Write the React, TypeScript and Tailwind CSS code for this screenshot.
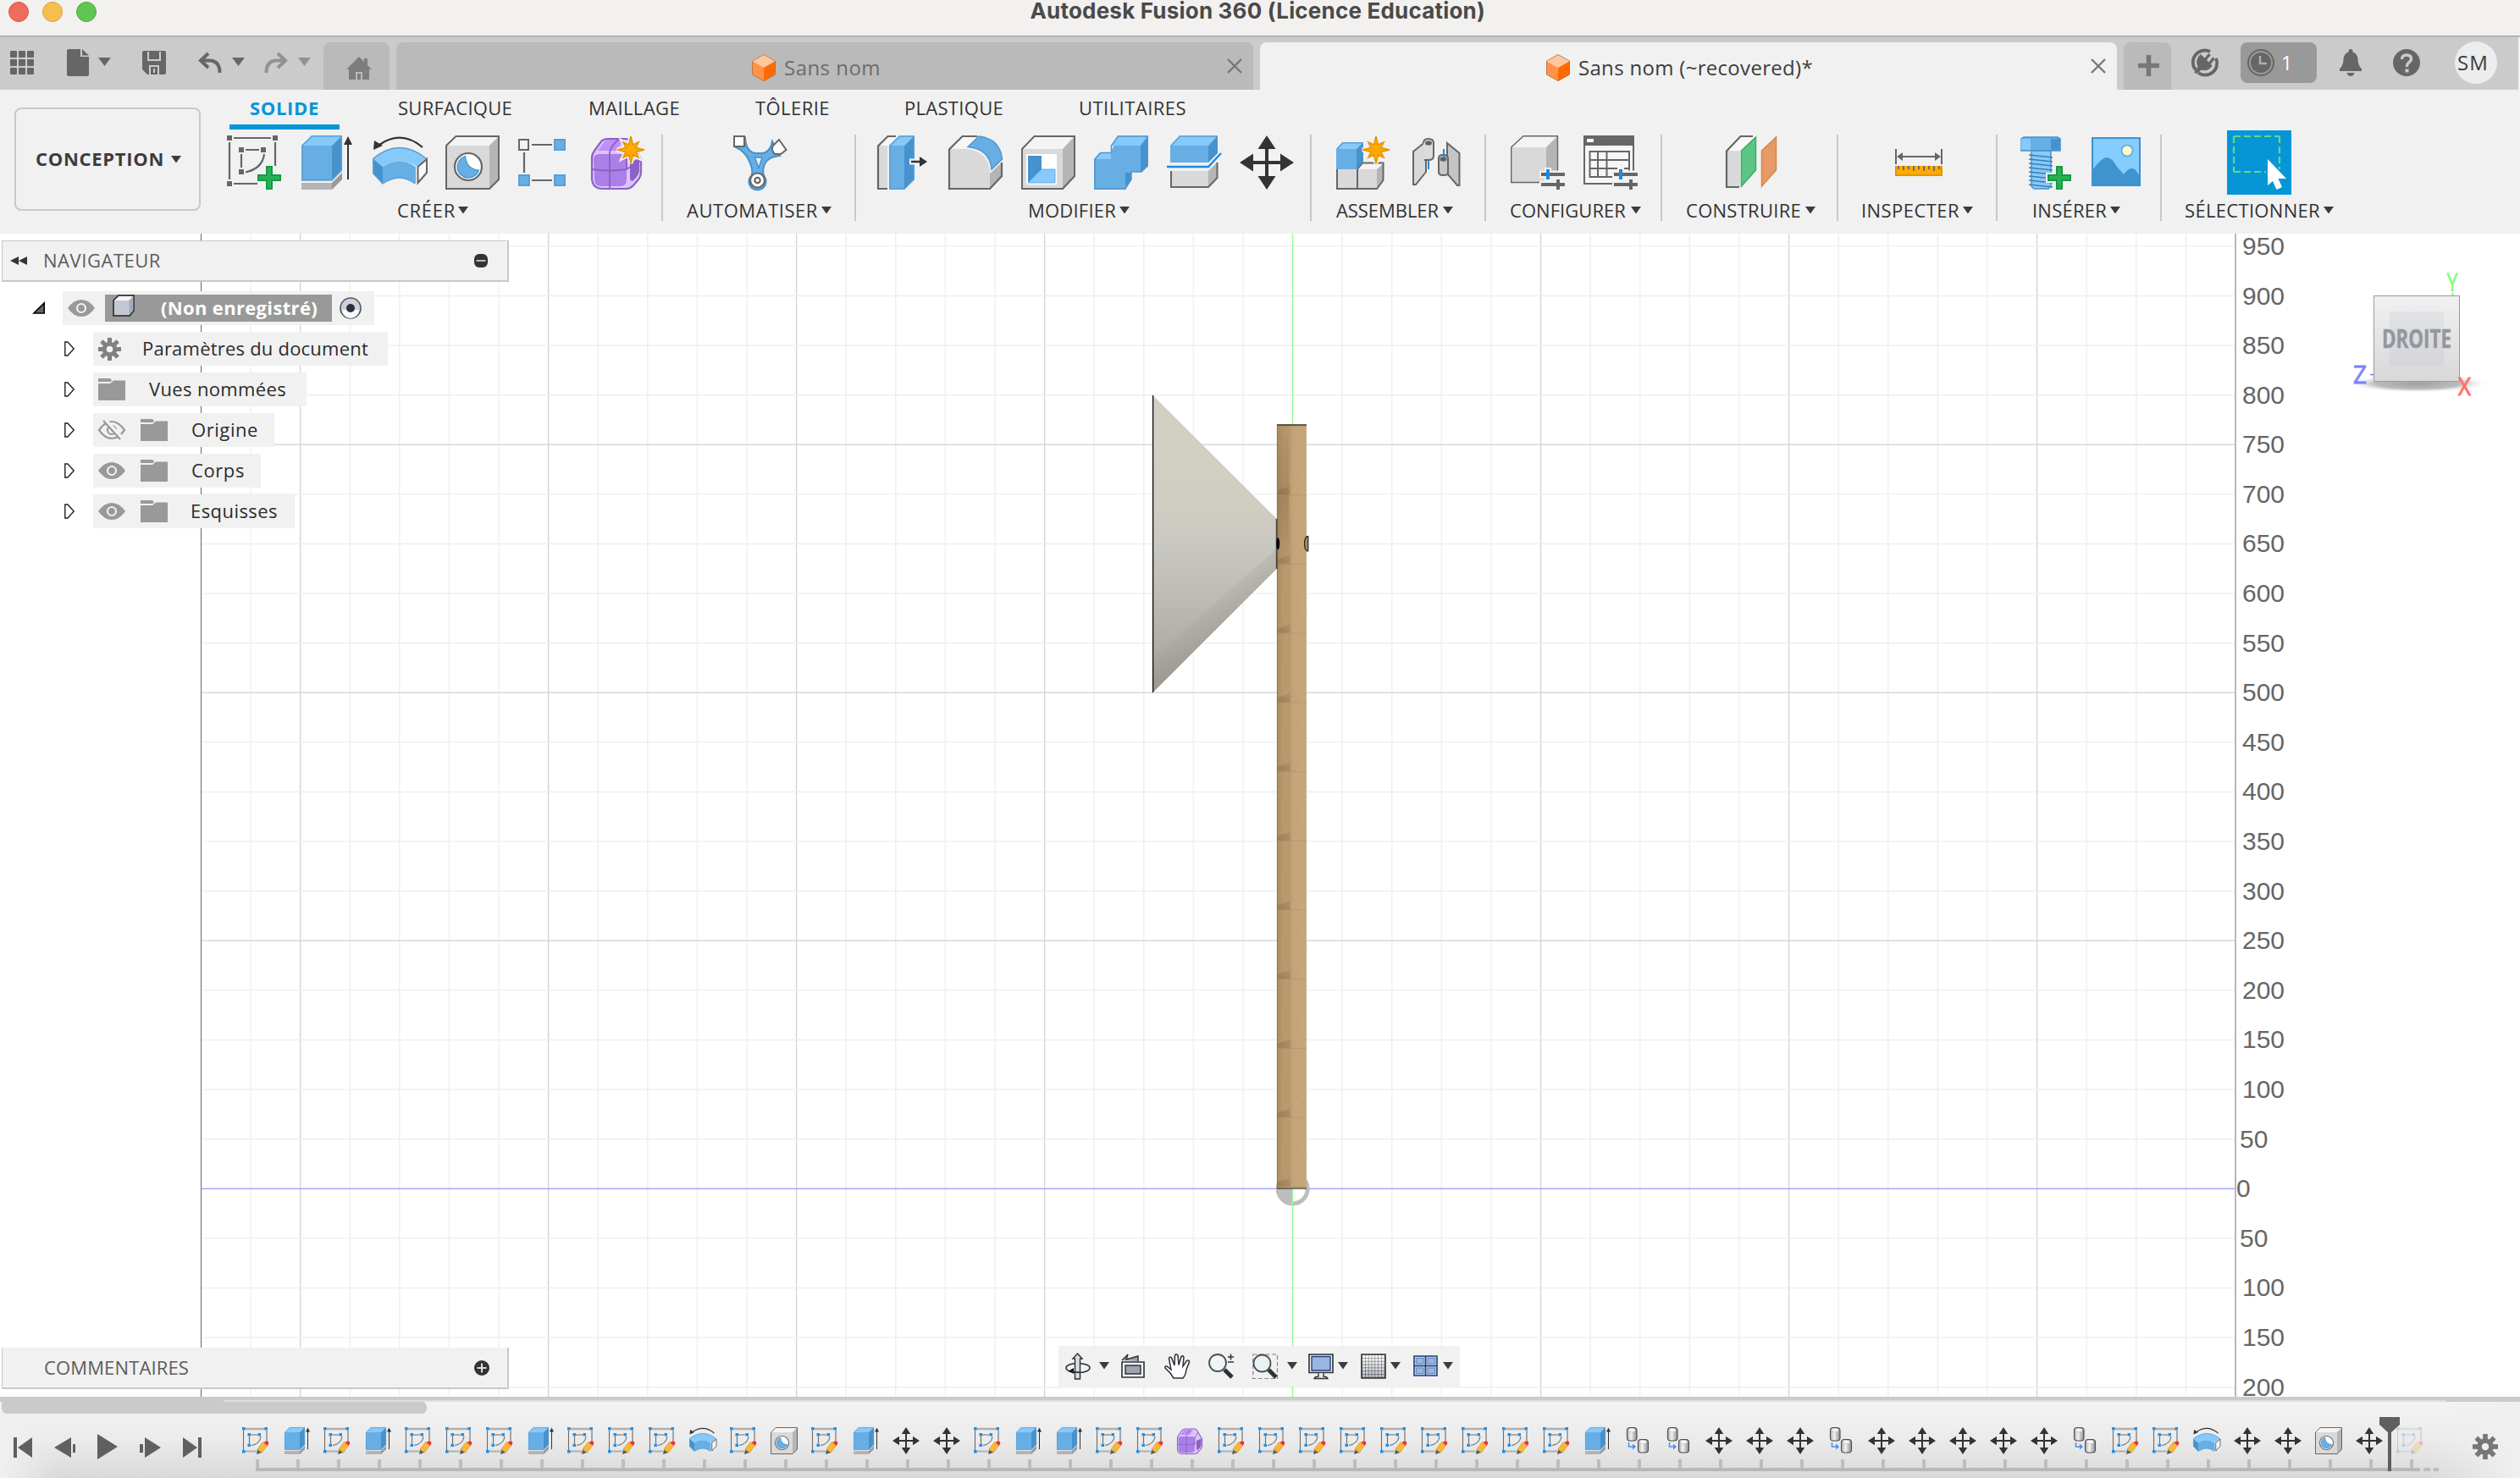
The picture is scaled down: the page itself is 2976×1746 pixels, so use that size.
import { useLayoutEffect, useRef, useState } from "react";
import type { ReactNode } from "react";

const LIGHT = "#87c9fb";
const MID = "#67aee5";
const DARK = "#4592cd";
const EDGE = "#666666";

/* Text whose tracking is adjusted so that it fills the given width. */
function Fit({ w, className = "", children }: { w: number; className?: string; children: string }) {
  const ref = useRef<HTMLSpanElement>(null);
  const [tracking, setTracking] = useState(0);
  useLayoutEffect(() => {
    const el = ref.current;
    if (!el) return;
    const natural = el.getBoundingClientRect().width - tracking * children.length;
    setTracking((w - natural) / children.length);
  }, []);
  return (
    <span className={"block shrink-0 whitespace-nowrap leading-none " + className} style={{ width: w }}>
      <span ref={ref} className="inline-block" style={{ letterSpacing: tracking }}>
        {children}
      </span>
    </span>
  );
}

function Caret({ className = "", w = 12, h = 8.5, fill = "#3c3c3c" }: { className?: string; w?: number; h?: number; fill?: string }) {
  return (
    <svg className={"shrink-0 " + className} width={w} height={h} viewBox="0 0 12 8" preserveAspectRatio="none">
      <path d="M0 0H12L6 8Z" fill={fill} />
    </svg>
  );
}

function Ic({ className = "", size = 64, w, h, vb, children }: { className?: string; size?: number; w?: number; h?: number; vb?: string; children: ReactNode }) {
  return (
    <svg className={"shrink-0 overflow-visible " + className} width={w ?? size} height={h ?? size} viewBox={vb ?? "0 0 64 64"} fill="none">
      {children}
    </svg>
  );
}

function Star({ x, y }: { x: number; y: number }) {
  const list = Array.from({ length: 16 }, (_, i) => {
    const r = i % 4 === 0 ? 16 : i % 2 === 0 ? 13 : 6.5;
    const a = (i * Math.PI) / 8 - Math.PI / 2;
    return `${(x + r * Math.cos(a)).toFixed(1)},${(y + r * Math.sin(a)).toFixed(1)}`;
  }).join(" ");
  return (
    <g>
      <polygon points={list} fill="#f1f1f1" stroke="#f1f1f1" strokeWidth="5" />
      <polygon points={list} fill="#ffaa00" stroke="#e59400" strokeWidth="1.5" />
    </g>
  );
}

function Plus({ x, y }: { x: number; y: number }) {
  const d = `M${x - 3} ${y - 13}h6v10h10v6h-10v10h-6v-10h-10v-6h10z`;
  return (
    <g>
      <path d={d} stroke="#f1f1f1" strokeWidth="6" />
      <path d={d} fill="#26b254" stroke="#169a40" strokeWidth="2" />
    </g>
  );
}

function Block({ d1, d2, d3, out, c = ["#f4f4f4", "#d9d9d9", "#b5b5b5"], s = EDGE, sw = 2 }: { d1: string; d2: string; d3: string; out?: string; c?: string[]; s?: string; sw?: number }) {
  return (
    <g>
      <path d={d1} fill={c[0]} />
      <path d={d2} fill={c[1]} />
      <path d={d3} fill={c[2]} />
      {out && <path d={out} stroke={s} strokeWidth={sw} />}
    </g>
  );
}
const BLUE = [LIGHT, MID, DARK];

const SketchG = () => (
  <g>
    <g stroke={EDGE} strokeWidth="2.2">
      <path d="M8 3H52M3 8V52M57 8V36M8 57H36M22 17H38M17 22V38M44 22Q42 39 22 43.500" />
    </g>
    <path d="M0 0h6v6H0zM54 0h6v6h-6zM0 54h6v6H0zM14 14h6v6h-6zM40 14h6v6h-6zM14 40h6v6h-6z" fill={EDGE} />
    <Plus x={50} y={50} />
  </g>
);

const SketchEditG = () => (
  <g>
    <path d="M4 4H56" stroke="#b0b0b0" strokeWidth="5" />
    <path d="M4 57H34" stroke="#b0b0b0" strokeWidth="4" />
    <path d="M3 8V54M58 8V34M20 18H36M17 22V38M44 22Q42 39 22 43" stroke="#6b6b6b" strokeWidth="2.200" />
    <path d="M0 0h7v7H0zM53 0h7v7h-7zM0 54h7v7H0zM13 14h7v7h-7zM37 14h7v7h-7zM13 39h7v7h-7z" fill="#1c8fe8" />
    <path d="M36 52 49 35 59 43 47 60Z" fill="#f6b73c" stroke="#e09a20" strokeWidth="1.500" />
    <path d="M36 53 46 60 34 64Z" fill="#5a5a5a" />
    <path d="M51 36 Q55 31 62 34 Q64 38 60 44Z" fill="#ee2f2f" />
  </g>
);

const ExtrudeG = () => (
  <g>
    <Block d1="M4 56H40V64H4Z" d2="M4 56H40V64H4Z" d3="M40 56 52 44V52L40 64Z" c={["#b4b4b4", "#b4b4b4", "#999999"]} />
    <Block d1="M4 12 16 0H52L40 12Z" d2="M4 12H40V53.500H4Z" d3="M40 12 52 0V41.500L40 53.500Z" c={BLUE} out="M4.800 12 16.500 .8H51.300V41L40 52.800H4.800Z" s="#5a9fd6" sw={1.5} />
    <path d="M59 8V52" stroke="#333" strokeWidth="2" />
    <path d="M54 11H64L59 1Z" fill="#333" />
  </g>
);

const RevolveG = () => (
  <g>
    <path d="M0 27Q32 1 64 27L53 37Q32 24 12 37Z" fill={LIGHT} />
    <path d="M12 37Q32 24 51 37V57Q32 43 12 57Z" fill={MID} />
    <path d="M0 27 12 37V57L0 45Z" fill={DARK} />
    <path d="M1 27Q32 2 63 27M1 27V45L12 57Q32 43 50 57" stroke="#5a9fd6" strokeWidth="1.500" />
    <path d="M53.500 37 64 28V44L53.500 56Z" fill="#fafafa" stroke={EDGE} strokeWidth="2" />
    <path d="M59 14Q34 -7 8 11" stroke="#333" strokeWidth="2.200" />
    <path d="M1 17 2 6 12 12Z" fill="#333" />
  </g>
);

const HoleG = () => (
  <g>
    <Block d1="M0 12 12 0H64L52 12Z" d2="M0 12H52V64H0Z" d3="M52 12 64 0V52L52 64Z" out="M1 12 12.500 1H63V52L52 63H1Z" />
    <circle cx="27" cy="37" r="16" fill="#fff" stroke={EDGE} strokeWidth="2.200" />
    <path d="M23.500 24.500A13 13 0 1 0 39.500 41Q25 40 23.500 24.500Z" fill={MID} stroke={DARK} strokeWidth="1.200" />
  </g>
);

const PatternG = () => (
  <g>
    <path d="M1 5h11v12H1z" fill="#f4f4f4" stroke={EDGE} strokeWidth="2" />
    <path d="M43 5h12v12H43zM1 47h12v12H1zM43 47h12v12H43z" fill={MID} stroke="#5a9fd6" strokeWidth="2" />
    <path d="M16 11H40M7 20V44M16 53H40" stroke={EDGE} strokeWidth="2.200" />
  </g>
);

const FormG = ({ star = true }: { star?: boolean }) => (
  <g>
    <path d="M1 26Q1 22 4 18L12 7Q15 4 20 4H42Q46 4 50 12L59 28V44Q59 48 56 52L50 59Q46 63 42 63H14Q1 63 1 50Z" fill="#dcc4fa" stroke="#8a62c4" strokeWidth="2.200" />
    <path d="M8 18 16 7Q18 5 22 5H38L32 16Q31 18 27 18Z" fill="#c08ffa" />
    <path d="M3 28Q3 22 10 22H36Q42 22 42 28V52Q42 60 34 60H12Q4 60 4 52Z" fill="#ab7fe8" />
    <path d="M46 32 57 27V42Q56 48 49 54Q46 54 46 50Z" fill="#8d60c8" />
    <path d="M22 20V62M2 40Q20 43 42 40L58 30M22 20Q24 12 32 5M42 40V24L50 12" stroke="#8a62c4" strokeWidth="1.800" />
    {star && <Star x={47} y={17} />}
  </g>
);

const MoveG = () => (
  <g fill="#333">
    <path d="M30 12H34V52H30ZM12 30H52V34H12Z" />
    <path d="M32 0 42.500 16H21.500ZM32 64 42.500 48H21.500ZM0 32 16 21.500V42.500ZM64 32 48 21.500V42.500Z" />
  </g>
);

const CopyG = () => (
  <g stroke="#4a4a4a" strokeWidth="2.200">
    <rect x="7" y="1" width="23" height="31" rx="7" fill="url(#cyl)" />
    <ellipse cx="18.500" cy="7" rx="8" ry="4" fill="#fafafa" stroke="#aaa" strokeWidth="1" />
    <rect x="33" y="29" width="24" height="31" rx="7" fill="url(#cyl)" />
    <ellipse cx="45" cy="35" rx="8" ry="4" fill="#fafafa" stroke="#aaa" strokeWidth="1" />
    <path d="M11 36V46H22" stroke="#4a90f0" strokeWidth="3" />
    <path d="M20 39 28 46 20 53Z" fill="#4a90f0" stroke="none" />
  </g>
);

const AutomateG = () => (
  <g>
    <path d="M3 14Q15 19 20 33Q25 45 19.500 50A10 10 0 1 0 37.500 50Q33 44 37 34Q41 25 55 24L46 7Q44 20 34 21H26Q15 19 14 3Z" fill={MID} stroke={DARK} strokeWidth="2" />
    <path d="M25.500 26H34L30 38.500Z" fill="#f1f1f1" stroke={DARK} strokeWidth="1.500" />
    <path d="M1 1H13V13H1Z" fill="#fff" stroke={EDGE} strokeWidth="2" />
    <path d="M54 5 62.500 17 56 22H49Q44 17 47 12Z" fill="#fff" stroke={EDGE} strokeWidth="2" />
    <circle cx="28.500" cy="53" r="8.500" fill="#fff" stroke={EDGE} strokeWidth="2.200" />
    <circle cx="28.500" cy="53" r="3.200" fill="#fff" stroke={EDGE} strokeWidth="2.200" />
  </g>
);

const PressPullG = () => (
  <g>
    <path d="M0 12 12 0H23L12 12V64H0Z" fill="#f6f6f6" />
    <path d="M1 12H12V63H1Z" fill="#d9d9d9" />
    <path d="M22 1H12.500L1 12.500V63H12" stroke={EDGE} strokeWidth="2.200" />
    <Block d1="M14 12 26 0H44L32 12Z" d2="M14 12H32V64H14Z" d3="M32 12 44 0V52L32 64Z" c={BLUE} out="M15 12 26.500 1H43V52L32 63H15Z" s="#5a9fd6" sw={1.5} />
    <path d="M38 31H56" stroke="#f4f4f4" strokeWidth="7" />
    <path d="M40 31H52" stroke="#333" strokeWidth="2.500" />
    <path d="M50 25V37L59 31Z" fill="#333" />
  </g>
);

const FilletG = () => (
  <g>
    <path d="M0 16 16 0H36L23 15Z" fill="#f6f6f6" />
    <path d="M1 16H22Q49 20 49 45V63H1Z" fill="#d9d9d9" />
    <path d="M49 45 64 31V48L49 63Z" fill="#b5b5b5" />
    <path d="M34 1H16.500L1 16.500V63H49L63 48V32" stroke={EDGE} strokeWidth="2.200" />
    <path d="M23 13.500 36 1Q61 4 63.500 28L51 40Q49 16 23 13.500Z" fill={MID} stroke="#5096d0" strokeWidth="1.500" />
  </g>
);

const ShellG = () => (
  <g>
    <Block d1="M0 16 15 0H64L49 16Z" d2="M0 16H49V64H0Z" d3="M49 16 64 0V48L49 64Z" out="M1 16 15.500 1H63V48L49 63H1Z" />
    <path d="M6 22H42V58H6Z" fill="#fff" />
    <path d="M8 24H24V40L8 56Z" fill={DARK} />
    <path d="M24 40H40V56H8Z" fill={LIGHT} stroke={MID} strokeWidth="1" />
  </g>
);

const CombineG = () => (
  <g>
    <path d="M0 28 7 20H20L28 0H64V36L56 43H44V52L37 64H0Z" fill={MID} />
    <path d="M20 12 28 0H64L55 12ZM0 28 7 20H20V28Z" fill={LIGHT} />
    <path d="M55 12 64 0V36L56 43H55ZM37 44H44V52L37 64Z" fill={DARK} />
    <path d="M1 28 8 20.500H20.500V12L28.500 1H63V36L56 43H44V52L36.500 63H1Z" stroke="#5096d0" strokeWidth="1.500" />
  </g>
);

const SplitG = () => (
  <g>
    <Block d1="M4 12 15 0H60L49 12Z" d2="M4 12H49V32H4Z" d3="M49 12 60 0V21L49 32Z" c={BLUE} out="M5 12 15.500 1H59.500" s="#5a9fd6" sw={1.5} />
    <path d="M0 37H49L64 21" stroke="#1a8ae6" strokeWidth="2.400" />
    <Block d1="M4 42H49V61H4Z" d2="M4 42H49V61H4Z" d3="M49 42 60 31V50L49 61Z" out="M5 42V61H49L59.500 50V32" />
  </g>
);

const NewComponentG = () => (
  <g>
    <Block d1="M26 40 31 32H56L48 40Z" d2="M0 40H48V63H0Z" d3="M48 40 56 33V53L48 63Z" out="M25 40 31 32.500H55.500V53L48 63H1V40M25 40V63" />
    <Block d1="M0 16 7 8H32L24 16Z" d2="M0 16H24V40H0Z" d3="M24 16 32 8V31L24 40Z" c={BLUE} out="M1 16 7.500 8.800H31.500" s="#5a9fd6" sw={1.5} />
    <Star x={47} y={17} />
  </g>
);

const JointG = () => (
  <g stroke={EDGE} strokeWidth="2">
    <path d="M5 19 20 7V43L8 58H5Z" fill="#d9d9d9" />
    <path d="M17 9Q17 4 23 4Q29 4 29 9V24Q29 29 23 29H18" fill="#dcdcdc" />
    <ellipse cx="23" cy="9" rx="3" ry="1.800" fill="#555" />
    <path d="M23 30V40" stroke="#1a8ae6" />
    <path d="M45 9 59.500 21V59H57L45 45Z" fill="#c4c4c4" />
    <path d="M35 27Q35 23 40 23Q46 23 46 27V46Q35 49 35 43Z" fill="#c8c8c8" />
    <ellipse cx="40.500" cy="28" rx="3" ry="1.800" fill="#555" />
    <path d="M41 16V27" stroke="#1a8ae6" />
  </g>
);

const Sliders = () => (
  <g>
    <path d="M34 46H64M34 58H64" stroke="#f1f1f1" strokeWidth="9" />
    <path d="M44 38V54M56 50V64" stroke="#f1f1f1" strokeWidth="8" />
    <path d="M36 46H64M36 58H64M56 52V64" stroke={EDGE} strokeWidth="4" />
    <path d="M44 40V52" stroke="#1a8ae6" strokeWidth="4" />
  </g>
);

const ConfigG = () => (
  <g>
    <Block d1="M0 14 15 0H56L42 14Z" d2="M0 14H42V56H0Z" d3="M42 14 56 0V44L42 56Z" out="M.7 14 15 .7H55.500V43.500L42 55.500H.7Z" sw={1.4} />
    <Sliders />
  </g>
);

const TableG = () => (
  <g>
    <path d="M1 1H59V57H1Z" fill="#f6f6f6" stroke={EDGE} strokeWidth="2" />
    <path d="M0 0H60V12H0Z" fill={EDGE} />
    <path d="M4 4H12V8H4Z" fill="#fff" />
    <path d="M7.500 19H54V49H7.500ZM7.500 29H54M7.500 39H54M17 19V49M27.500 19V49" stroke={EDGE} strokeWidth="2" />
    <path d="M50 42H64V64H50Z" fill="#f1f1f1" />
    <Sliders />
  </g>
);

const PlaneG = () => (
  <g>
    <path d="M0 18 17 0H35L18 18Z" fill="#f8f8f8" />
    <path d="M1 18H17V61H1Z" fill="#d9d9d9" />
    <path d="M32 1H17.500L1 18.500V61H16" stroke={EDGE} strokeWidth="2.200" />
    <path d="M18.500 18 35.500 2V41L18.500 60Z" fill="#5bc582" stroke="#3fae68" strokeWidth="1.500" />
    <path d="M42.500 18 59.500 2V41L42.500 60Z" fill="#e69a66" stroke="#d98747" strokeWidth="1.500" />
  </g>
);

const MeasureG = () => (
  <g>
    <path d="M1 16V34M55 16V34M4 25H52" stroke={EDGE} strokeWidth="2" />
    <path d="M2 25 9 20V30ZM54 25 47 20V30Z" fill={EDGE} />
    <path d="M0 36H56V48H0Z" fill="#ffaa00" />
    <path d="M0 47H56M1 36V48M55 36V48" stroke="#e59400" strokeWidth="2" />
    <path d="M4 36V40M10 36V41M16 36V40M22 36V42M28 36V40M34 36V42M40 36V40M46 36V42M52 36V40" stroke={EDGE} strokeWidth="1.800" />
  </g>
);

const BoltG = () => (
  <g>
    <path d="M13 18H36V60L33 63H16L13 60Z" fill={LIGHT} stroke={DARK} strokeWidth="1.500" />
    <path d="M10 23 38 26M10 28 38 31M10 33 38 36M10 38 38 41M10 43 38 46M10 48 38 51M10 53 38 56M10 58 38 61" stroke="#3a7fb4" strokeWidth="1.700" />
    <path d="M1 4 4 2H44L47 4V18H1Z" fill={MID} stroke={DARK} strokeWidth="1.500" />
    <path d="M1 4H12V17H1Z" fill={LIGHT} />
    <path d="M36 4H47V17H36Z" fill={DARK} />
    <Plus x={46} y={50} />
  </g>
);

const ImageG = () => (
  <g>
    <path d="M1 3H57V59H1Z" fill="#85ccff" stroke="#3d92cd" strokeWidth="2" />
    <circle cx="42" cy="18" r="6.500" fill="#fdfbc8" stroke="#5aa7dc" strokeWidth="1.500" />
    <path d="M2 40Q12 26 18 26Q24 26 30 37L38 46Q44 38 48 39Q52 39 56 47V58H2Z" fill="#3f94cf" />
  </g>
);

function Label({ t, w, className, gap }: { t: string; w: number; className: string; gap: string }) {
  return (
    <div className={"mt-3 flex h-[26px] items-center " + className}>
      <Fit w={w} className="text-[22px] text-[#333]">{t}</Fit>
      <Caret className={gap} />
    </div>
  );
}

function Group({ className, children, label }: { className: string; children: ReactNode; label: ReactNode }) {
  return (
    <div className={"h-[102px] shrink-0 border-[#c8c8c8] " + className}>
      <div className="flex h-16 items-start pt-px">{children}</div>
      {label}
    </div>
  );
}

function CubeOrange() {
  return (
    <Ic w={28} h={32} vb="0 0 28 32">
      <path d="M14 0 28 8 14 16 0 8Z" fill="#ffc79e" />
      <path d="M0 8 14 16V32L0 24Z" fill="#ff9448" />
      <path d="M28 8 14 16V32L28 24Z" fill="#ff6b00" />
      <path d="M14 .5 27.500 8V24L14 31.500 .5 24V8Z" stroke="#a9714a" strokeWidth=".8" />
    </Ic>
  );
}

const CloseX = ({ className }: { className: string }) => (
  <Ic className={className} w={18} h={18} vb="0 0 18 18">
    <path d="M1 1 17 17M17 1 1 17" stroke="#777" strokeWidth="2.400" />
  </Ic>
);

const Undo = ({ c, flip, className }: { c: string; flip?: boolean; className: string }) => (
  <Ic className={className} w={27} h={24} vb="0 0 27 24">
    <g transform={flip ? "translate(27 0) scale(-1 1)" : undefined}>
      <path d="M11 1 2 9.500 11 18" stroke={c} strokeWidth="4" />
      <path d="M3 9.500H12Q24.500 9.500 24.500 24" stroke={c} strokeWidth="4" />
    </g>
  </Ic>
);

function TopBar() {
  return (
    <div className="flex h-[62px] w-[2974px] items-start bg-[#cbcbcb]">
      <Ic className="ml-3 mt-4" w={28} h={28} vb="0 0 28 28">
        {[0, 10, 20].map((y) => [0, 10, 20].map((x) => <rect key={x + y * 3} x={x} y={y} width="8" height="8" rx="1" fill={EDGE} />))}
      </Ic>
      <Ic className="ml-[39px] mt-[14px]" w={26} h={32} vb="0 0 26 32">
        <path d="M2 0H16V9H26V30Q26 32 24 32H2Q0 32 0 30V2Q0 0 2 0Z" fill={EDGE} />
        <path d="M18 0 26 7.500H18Z" fill={EDGE} />
      </Ic>
      <Caret className="ml-[11px] mt-6" w={15} h={10} fill={EDGE} />
      <Ic className="ml-[37px] mt-4" w={28} h={28} vb="0 0 28 28">
        <path d="M2 0H26Q28 0 28 2V26Q28 28 26 28H6L0 22V2Q0 0 2 0Z" fill={EDGE} />
        <path d="M7 1V11H21V1" stroke="#cbcbcb" strokeWidth="2" />
        <path d="M9 28V18H19V28M14 21V26" stroke="#cbcbcb" strokeWidth="2" />
      </Ic>
      <Undo className="ml-[39px] mt-[18px]" c={EDGE} />
      <Caret className="ml-3 mt-6" w={15} h={10} fill={EDGE} />
      <Undo className="ml-[23px] mt-[18px]" c="#929292" flip />
      <Caret className="ml-[13px] mt-6" w={15} h={10} fill="#929292" />
      <div className="ml-[15px] mt-[6px] flex h-14 w-[78px] shrink-0 justify-center rounded-t-lg bg-[#bababa]">
        <Ic className="ml-[6px] mt-[17px]" w={30} h={27} vb="0 0 30 27">
          <path d="M0 15 15 0 21 6V2H25V10L30 15H27V27H19V18H11V27H3V15Z" fill="#7d7d7d" />
          <path d="M13 20H17V27H13Z" fill="#7d7d7d" />
        </Ic>
      </div>
      <div className="ml-2 mt-[6px] flex h-14 w-[1012px] shrink-0 items-start rounded-t-lg bg-[#bababa]">
        <div className="ml-[420px] mt-[14px] flex h-8 items-center gap-[10px]">
          <CubeOrange />
          <Fit w={114} className="text-[24px] text-[#6c6c6c]">Sans nom</Fit>
        </div>
        <CloseX className="ml-[409px] mt-[19px]" />
      </div>
      <div className="ml-2 mt-[6px] flex h-14 w-[1012px] shrink-0 items-start rounded-t-lg bg-[#f1f1f1]">
        <div className="ml-[338px] mt-[14px] flex h-8 items-center gap-[10px]">
          <CubeOrange />
          <Fit w={277} className="text-[24px] text-[#3c3c3c]">Sans nom (~recovered)*</Fit>
        </div>
        <CloseX className="ml-[328px] mt-[19px]" />
      </div>
      <div className="ml-2 mt-[6px] flex h-14 w-14 shrink-0 justify-center rounded-t-lg bg-[#bababa]">
        <Ic className="ml-[3px] mt-[15px]" w={25} h={25} vb="0 0 25 25">
          <path d="M12.500 0V25M0 12.500H25" stroke="#777" strokeWidth="5.500" />
        </Ic>
      </div>
      <Ic className="ml-6 mt-[14px]" w={32} h={32} vb="0 0 32 32">
        <path d="M5 24.500A14 14 0 0 1 22 3M29 11A14 14 0 0 1 8 28" stroke={EDGE} strokeWidth="3.800" />
        <path d="M3 27.500 7.500 21Q3.500 12 11 6L24.500 19.500Q20 27 12 24.500L6 29Z" fill={EDGE} />
        <path d="M15 14 21.500 6M20 18.500 26.500 10.500" stroke={EDGE} strokeWidth="3.400" />
      </Ic>
      <div className="ml-[26px] mt-[6px] flex h-12 w-[90px] shrink-0 items-center rounded-lg bg-[#999999]">
        <Ic className="ml-2" w={32} h={32} vb="0 0 32 32">
          <circle cx="16" cy="16" r="15" stroke={EDGE} strokeWidth="2" />
          <circle cx="16" cy="16" r="12" fill={EDGE} />
          <path d="M15 8V17H23" stroke="#b0b0b0" strokeWidth="2.400" />
        </Ic>
        <span className="ml-2 text-[23px] leading-none text-white">1</span>
      </div>
      <Ic className="ml-[27px] mt-[14px]" w={26} h={32} vb="0 0 26 32">
        <path d="M13 0Q15.500 0 15.500 2.500V3.500Q21 5 21.500 12Q21.500 19 26 23.500V26H0V23.500Q4.500 19 4.500 12Q5 5 10.500 3.500V2.500Q10.500 0 13 0ZM8.500 28H17.500Q16.500 32 13 32Q9.500 32 8.500 28Z" fill={EDGE} />
      </Ic>
      <Ic className="ml-[37px] mt-[14px]" w={32} h={32} vb="0 0 32 32">
        <circle cx="16" cy="16" r="16" fill={EDGE} />
        <path d="M10.500 12Q10.500 7 16 7Q21.500 7 21.500 11.500Q21.500 14 18.500 16Q16.500 17.500 16.500 21" stroke="#cbcbcb" strokeWidth="3.400" />
        <path d="M14.500 23.500H18.500V27.500H14.500Z" fill="#cbcbcb" />
      </Ic>
      <div className="ml-[41px] mt-[5px] flex size-[50px] shrink-0 items-center rounded-full bg-[#ededed] pl-[3px]">
        <Fit w={37} className="text-[24px] text-[#3c3c3c]">SM</Fit>
      </div>
    </div>
  );
}

function Ribbon() {
  return (
    <div className="flex h-[170px] items-start bg-[#f1f1f1]">
      <div className="ml-[17px] mt-[21px] flex h-[122px] w-[220px] shrink-0 items-center rounded-lg border-2 border-[#c8c8c8] pb-[2px]">
        <Fit w={152} className="ml-[23px] text-[22px] font-bold text-[#3c3c3c]">CONCEPTION</Fit>
        <Caret className="ml-[8px] mt-[2px]" />
      </div>
      <div className="flex-1">
        <div className="flex h-[53px] text-[22px] text-[#333]">
          <div className="ml-[34px] flex h-[47px] w-[130px] shrink-0 justify-center border-b-[6px] border-[#0696d7] pt-[10px] text-[#0696d7]">
            <Fit w={82} className="h-7 font-bold leading-none">SOLIDE</Fit>
          </div>
          <Fit w={135} className="ml-[69px] pt-[10px]">SURFACIQUE</Fit>
          <Fit w={108} className="ml-[90px] pt-[10px]">MAILLAGE</Fit>
          <Fit w={88} className="ml-[89px] pt-[10px]">TÔLERIE</Fit>
          <Fit w={117} className="ml-[88px] pt-[10px]">PLASTIQUE</Fit>
          <Fit w={127} className="ml-[89px] pt-[10px]">UTILITAIRES</Fit>
        </div>
        <div className="flex">
          <Group className="w-[546px] border-r-2" label={<Label t="CRÉER" w={69} className="ml-[232px]" gap="ml-[3px]" />}>
            <Ic className="ml-[31px]"><SketchG /></Ic>
            <Ic className="ml-5"><ExtrudeG /></Ic>
            <Ic className="ml-6"><RevolveG /></Ic>
            <Ic className="ml-[22px]"><HoleG /></Ic>
            <Ic className="ml-[22px]"><PatternG /></Ic>
            <Ic className="ml-[22px]"><FormG /></Ic>
          </Group>
          <Group className="w-[228px] border-r-2" label={<Label t="AUTOMATISER" w={155} className="ml-7" gap="ml-[4px]" />}>
            <Ic className="ml-[83px]"><AutomateG /></Ic>
          </Group>
          <Group className="w-[538px] border-r-2" label={<Label t="MODIFIER" w={104} className="ml-[203px]" gap="ml-[4px]" />}>
            <Ic className="ml-[25px]"><PressPullG /></Ic>
            <Ic className="ml-5"><FilletG /></Ic>
            <Ic className="ml-[22px]"><ShellG /></Ic>
            <Ic className="ml-[22px]"><CombineG /></Ic>
            <Ic className="ml-[22px]"><SplitG /></Ic>
            <Ic className="ml-[22px]"><MoveG /></Ic>
          </Group>
          <Group className="w-[206px] border-r-2" label={<Label t="ASSEMBLER" w={121} className="ml-[29px]" gap="ml-[5px]" />}>
            <Ic className="ml-[29px]"><NewComponentG /></Ic>
            <Ic className="ml-[22px]"><JointG /></Ic>
          </Group>
          <Group className="w-[208px] border-r-2" label={<Label t="CONFIGURER" w={137} className="ml-[28px]" gap="ml-[6px]" />}>
            <Ic className="ml-[29px]"><ConfigG /></Ic>
            <Ic className="ml-[22px]"><TableG /></Ic>
          </Group>
          <Group className="w-[208px] border-r-2" label={<Label t="CONSTRUIRE" w={136} className="ml-[28px]" gap="ml-[5px]" />}>
            <Ic className="ml-[75px]"><PlaneG /></Ic>
          </Group>
          <Group className="w-[188px] border-r-2" label={<Label t="INSPECTER" w={116} className="ml-[27px]" gap="ml-[4px]" />}>
            <Ic className="ml-[67px]"><MeasureG /></Ic>
          </Group>
          <Group className="w-[194px] border-r-2" label={<Label t="INSÉRER" w={88} className="ml-[41px]" gap="ml-[4px]" />}>
            <Ic className="ml-[27px]"><BoltG /></Ic>
            <Ic className="ml-5"><ImageG /></Ic>
          </Group>
          <Group className="w-[300px]" label={<Label t="SÉLECTIONNER" w={160} className="ml-[27px]" gap="ml-[4px]" />}>
            <div className="-mt-[6px] ml-[77px] size-[76px] shrink-0 bg-[#0696d7]">
              <Ic size={76} vb="0 0 76 76">
                <path d="M8 7H62M8 49H46M8 7V49M62 7V46" stroke="#62d886" strokeWidth="2.200" strokeDasharray="8 4" />
                <path d="M48 34V65L54 60 58.500 70 65 67 60.500 57H70Z" fill="#fff" />
              </Ic>
            </div>
          </Group>
        </div>
      </div>
    </div>
  );
}

const STEP = 58.6;
const X0 = 1526.6;
const Y0 = 1128.3;

function Scene() {
  const cols = Array.from({ length: 41 }, (_, i) => i - 21).filter((k) => k !== 0);
  const rows = Array.from({ length: 24 }, (_, i) => i - 4).filter((k) => k !== 0);
  return (
    <svg className="absolute inset-0" width="2976" height="1374" viewBox="0 0 2976 1374" fill="none">
      <defs>
        <linearGradient id="cone" x1="0" y1="0" x2="0" y2="1">
          <stop offset="0" stopColor="#d3d0c3" />
          <stop offset=".38" stopColor="#d0cdc2" />
          <stop offset=".48" stopColor="#cac8c3" />
          <stop offset=".64" stopColor="#c0beb7" />
          <stop offset=".82" stopColor="#b2b0a8" />
          <stop offset="1" stopColor="#9f9d94" />
        </linearGradient>
        <linearGradient id="coneShade" x1="1420" y1="430" x2="1460" y2="472" gradientUnits="userSpaceOnUse">
          <stop offset="0" stopColor="#8f8d84" stopOpacity="0" />
          <stop offset="1" stopColor="#8f8d84" stopOpacity=".5" />
        </linearGradient>
        <linearGradient id="wood" x1="0" y1="0" x2="1" y2="0">
          <stop offset="0" stopColor="#ab8d62" />
          <stop offset=".2" stopColor="#b8996d" />
          <stop offset=".45" stopColor="#bc9d70" />
          <stop offset=".55" stopColor="#c5a578" />
          <stop offset="1" stopColor="#c7a87c" />
        </linearGradient>
        <linearGradient id="woodShade" x1="0" y1="0" x2="0" y2="1">
          <stop offset="0" stopColor="#7d6442" stopOpacity=".05" />
          <stop offset=".35" stopColor="#7d6442" stopOpacity=".35" />
          <stop offset=".7" stopColor="#7d6442" stopOpacity="0" />
        </linearGradient>
        <linearGradient id="knot" x1="0" y1="0" x2="1" y2="-.6">
          <stop offset="0" stopColor="#7d6442" stopOpacity=".38" />
          <stop offset="1" stopColor="#7d6442" stopOpacity="0.100" />
        </linearGradient>
        <pattern id="planks" x="1508" y="227.600" width="35" height="81.700" patternUnits="userSpaceOnUse">
          <path d="M0 76 16 70V81H0Z" fill="url(#knot)" />
          <path d="M0 81.200H35" stroke="#a4865a" strokeWidth=".8" opacity=".5" />
          <path d="M17 10 34 0M17 20 34 8M17 31 34 18M17 42 34 28M17 53 34 38M17 64 34 49M17 75 34 60M19 81 34 70" stroke="#a98a5c" strokeWidth=".7" opacity=".35" />
          <path d="M6 4V30M11 12V66M15 2V70M3 30V62" stroke="#a58557" strokeWidth="1.200" opacity=".25" />
        </pattern>
        <linearGradient id="cube" x1="0" y1="0" x2="0" y2="1">
          <stop offset="0" stopColor="#f1f1f1" />
          <stop offset="1" stopColor="#d8d8d8" />
        </linearGradient>
        <linearGradient id="cubeIn" x1="0" y1="0" x2="0" y2="1">
          <stop offset="0" stopColor="#e2e3e6" />
          <stop offset="1" stopColor="#d4d5d8" />
        </linearGradient>
        <radialGradient id="shadow">
          <stop offset="0" stopColor="#a0a0a0" />
          <stop offset=".6" stopColor="#bcbcbc" />
          <stop offset="1" stopColor="#fff" stopOpacity="0" />
        </radialGradient>
        <linearGradient id="cyl" x1="0" y1="0" x2="1" y2="0">
          <stop offset="0" stopColor="#a8a8a8" />
          <stop offset=".4" stopColor="#f4f4f4" />
          <stop offset="1" stopColor="#8a8a90" />
        </linearGradient>
      </defs>
      {cols.map((k) => {
        const x = X0 + k * STEP;
        return x > 238 && x < 2640 ? (
          <path key={"c" + k} d={`M${x.toFixed(1)} 0V1374`} stroke={k % 5 === 0 ? "#d4d4d4" : "#efefef"} strokeWidth="1.400" />
        ) : null;
      })}
      {rows.map((k) => (
        <path key={"r" + k} d={`M238 ${(Y0 - k * STEP).toFixed(1)}H2640`} stroke={k % 5 === 0 ? "#d8d8d8" : "#efefef"} strokeWidth="1.400" />
      ))}
      <path d="M237.500 0V1374" stroke="#666" />
      <path d="M238 1128.300H2640" stroke="#a8a8ff" strokeWidth="1.500" />
      <path d="M2640 0V1374" stroke="#b8b8b8" strokeWidth="2" />
      <circle cx="1526.700" cy="1128.300" r="17.500" stroke="#bdbdbd" strokeWidth="5" fill="#fff" />
      <path d="M1526.700 1128.300H1507A20 20 0 0 0 1526.700 1148.300Z" fill="#bdbdbd" />
      <path d="M1526.500 0V226M1526.500 1128V1374" stroke="#98fb98" strokeWidth="1.500" />
      <path d="M1361.700 191.300 1508 337V395.700L1361.700 541.700Z" fill="url(#cone)" />
      <path d="M1362 500 1508 372V395.700L1362 541.700Z" fill="url(#coneShade)" />
      <path d="M1361.600 191V542" stroke="#111" strokeWidth="1.400" />
      <path d="M1508 225.500H1543V1128.300H1508Z" fill="url(#wood)" />
      <path d="M1508 225.500H1522V480H1508Z" fill="url(#woodShade)" />
      <path d="M1508 225.500H1543V1128.300H1508Z" fill="url(#planks)" />
      <path d="M1508.400 226V1128" stroke="#8b7350" strokeWidth=".9" />
      <path d="M1508 226H1543" stroke="#3f3a30" strokeWidth="1.600" />
      <path d="M1508 1128H1543" stroke="#2e2a22" strokeWidth="1.200" />
      <path d="M1507.700 337V396" stroke="#4b463c" strokeWidth="1.800" />
      <ellipse cx="1509.200" cy="366.300" rx="1.900" ry="7" fill="#000" />
      <path d="M1544.800 357.500H1543.500Q1540.500 360 1540.500 366.500Q1540.500 373 1543.500 375H1544.800Z" fill="#a88a60" stroke="#222" strokeWidth="1.200" />
      <ellipse cx="2855" cy="177" rx="84" ry="11" fill="url(#shadow)" />
      <path d="M2803.500 73.500H2904.500V174.500H2803.500Z" fill="url(#cube)" stroke="#9a9a9a" />
      <path d="M2822 92H2886V156H2822Z" fill="url(#cubeIn)" />
      <path d="M2896.500 70V73" stroke="#80ff80" strokeWidth="2" />
      <path d="M2799 166.500H2803" stroke="#8080ff" strokeWidth="1.600" />
      <g fontFamily="Open Sans, sans-serif" fontSize="30">
        <text x="2813" y="134.500" fontWeight="700" fontSize="30" textLength="82" lengthAdjust="spacingAndGlyphs" fill="#94979d" stroke="#94979d" strokeWidth=".5">DROITE</text>
        <text x="2889.500" y="68" textLength="13" lengthAdjust="spacingAndGlyphs" fill="#80ff80" stroke="#80ff80" strokeWidth=".8">Y</text>
        <text x="2779" y="176.500" textLength="16" lengthAdjust="spacingAndGlyphs" fill="#8080ff" stroke="#8080ff" strokeWidth=".8">Z</text>
        <text x="2903" y="190.500" textLength="15" lengthAdjust="spacingAndGlyphs" fill="#ff7070" stroke="#ff7070" strokeWidth="1">X</text>
      </g>
    </svg>
  );
}

const Folder = ({ className = "" }: { className?: string }) => (
  <Ic className={className} w={32} h={26} vb="0 0 32 26">
    <path d="M0 0H14L16 2 14.500 4H0Z" fill="#999" />
    <path d="M0 6H14L18 2.500H32V26H0Z" fill="#999" />
  </Ic>
);

const Eye = ({ className = "" }: { className?: string }) => (
  <Ic className={className} w={32} h={20} vb="0 0 32 20">
    <path d="M0 10Q7 0 16 0Q25 0 32 10Q25 20 16 20Q7 20 0 10Z" fill="#999" />
    <circle cx="16" cy="10" r="5" stroke="#f1f1f1" strokeWidth="2.200" />
  </Ic>
);

const EyeOff = () => (
  <Ic w={32} h={22} vb="0 0 32 22">
    <path d="M1 11Q8 1 16 1Q24 1 31 11Q24 21 16 21Q8 21 1 11Z" stroke="#999" strokeWidth="2.200" />
    <circle cx="16" cy="11" r="5" stroke="#999" strokeWidth="2.200" />
    <path d="M8 -1 28 21" stroke="#f1f1f1" strokeWidth="5" />
    <path d="M6 0 26 22" stroke="#999" strokeWidth="2.200" />
  </Ic>
);

function GearShape({ size, c, hole, className = "" }: { size: number; c: string; hole: string; className?: string }) {
  return (
    <Ic className={className} size={size} vb="0 0 32 32">
      {[0, 45, 90, 135].map((a) => (
        <rect key={a} x="13" y="0" width="6" height="32" fill={c} transform={`rotate(${a} 16 16)`} />
      ))}
      <circle cx="16" cy="16" r="10.500" fill={c} />
      <circle cx="16" cy="16" r="4.500" fill={hole} />
    </Ic>
  );
}

const Tri = () => (
  <Ic className="mr-[22px]" w={12} h={18} vb="0 0 12 18">
    <path d="M.8 1H4L11.200 9 4 17H.8Z" fill="#fff" stroke="#222" strokeWidth="1.400" />
  </Ic>
);

function Row({ className, children }: { className: string; children: ReactNode }) {
  return (
    <div className="flex h-10 items-center pl-[76px]">
      <Tri />
      <div className={"flex h-10 items-center bg-[#f1f1f1] pl-[6px] text-[22px] text-[#2c2c2c] " + className}>{children}</div>
    </div>
  );
}

function Tree() {
  return (
    <div className="absolute left-0 top-[68px] flex flex-col gap-2">
      <div className="flex h-10 items-center pl-[39px]">
        <Ic className="mr-[21px]" w={14} h={14} vb="0 0 14 14">
          <path d="M13.200 1V13H1Z" fill="#666" stroke="#000" strokeWidth="1.600" />
        </Ic>
        <div className="flex h-10 w-[368px] items-center bg-[#f1f1f1] pl-[6px]">
          <Eye />
          <div className="ml-3 flex h-8 w-[268px] items-center bg-[#999999] pl-[9px]">
            <Ic className="-mt-[6px]" w={26} h={26} vb="0 0 26 26">
              <path d="M1 7 7 1H25V19L20 25H1Z" fill="#c3c9d4" stroke="#222" strokeWidth="1.500" />
              <path d="M2 7 7.500 2H24L19.500 7Z" fill="#f4f5f7" />
              <path d="M19.500 7 24.300 2V19L19.500 24Z" fill="#a4abb9" />
            </Ic>
            <Fit w={185} className="ml-[31px] pb-[2px] text-[22px] font-bold text-white">(Non enregistré)</Fit>
          </div>
          <Ic className="ml-[9px]" size={26} vb="0 0 26 26">
            <circle cx="13" cy="13" r="12" fill="#c9d0de" stroke="#555" strokeWidth="1.600" />
            <path d="M3 15A10 10 0 0 0 23 15Z" fill="#f8f9fb" />
            <circle cx="13" cy="13" r="5" fill="#2c2f36" />
          </Ic>
        </div>
      </div>
      <Row className="w-[348px]">
        <GearShape size={27} c="#808080" hole="#f1f1f1" />
        <Fit w={267} className="ml-[25px] pb-[2px]">Paramètres du document</Fit>
      </Row>
      <Row className="w-[252px]">
        <Folder />
        <Fit w={162} className="ml-7 pb-[2px]">Vues nommées</Fit>
      </Row>
      <Row className="w-[214px]">
        <EyeOff />
        <Folder className="ml-[18px]" />
        <Fit w={79} className="ml-7 pb-[2px]">Origine</Fit>
      </Row>
      <Row className="w-[198px]">
        <Eye />
        <Folder className="ml-[18px]" />
        <Fit w={63} className="ml-7 pb-[2px]">Corps</Fit>
      </Row>
      <Row className="w-[238px]">
        <Eye />
        <Folder className="ml-[18px]" />
        <Fit w={103} className="ml-[27px] pb-[2px]">Esquisses</Fit>
      </Row>
    </div>
  );
}

function NavBar() {
  const S = "#2c2f36";
  return (
    <div className="absolute left-[1250px] top-[1314px] flex h-12 w-[474px] items-center bg-[#f1f1f1] pb-px">
      <Ic className="ml-2" size={30} vb="0 0 30 30">
        <ellipse cx="15" cy="17" rx="14" ry="5.500" stroke={S} strokeWidth="1.600" />
        <path d="M14.500 0 20 6H17.500V30H11.500V6H9Z" fill="#d9dde4" stroke={S} strokeWidth="1.400" />
        <path d="M4 20.500 10 17V24Z" fill="#111" />
        <path d="M8 21.500 18 22.400" stroke={S} strokeWidth="1.600" />
      </Ic>
      <Caret className="ml-[10px]" />
      <Ic className="ml-[14px]" w={28} h={28} vb="0 0 28 28">
        <path d="M1 7 8 0 6 6 20 2V8" fill="#9aa0ab" stroke={S} strokeWidth="1.400" />
        <path d="M1 9H27V27H1Z" fill="#f4f5f7" stroke={S} strokeWidth="1.600" />
        <path d="M5 13H23V23H5Z" fill="#9ea4b0" stroke={S} strokeWidth="1.400" />
      </Ic>
      <Ic className="ml-[23px]" size={30} vb="0 0 30 30">
        <path d="M11 29Q9 26 7 23L1 17Q0 14.500 3 15L8 19 5.500 6Q6 3 8.500 5L12 14 12.500 2Q14 -.5 16 2L17 13.500 20 3.500Q22 1.500 23 4.500L22 15 26.500 8.500Q29.500 7 29.500 10L26 19Q25 26 22 29Z" fill="#fdfdfd" stroke={S} strokeWidth="1.500" />
      </Ic>
      <Ic className="ml-[22px]" size={30} vb="0 0 30 30">
        <path d="M19 19 28 28" stroke={S} strokeWidth="5" />
        <circle cx="11" cy="11" r="10" fill="#eef6f5" stroke="#4a4f58" strokeWidth="1.800" />
        <path d="M23 4H30M26.500 .5V7.500M23 10H30" stroke="#333" strokeWidth="1.500" />
      </Ic>
      <Ic className="ml-[22px]" size={30} vb="0 0 30 30">
        <path d="M.7 1H29.500V29.500H.7Z" stroke="#888" strokeWidth="1.200" strokeDasharray="5 2.500" />
        <path d="M19 19 28 28" stroke="#333" strokeWidth="5" />
        <circle cx="11.500" cy="11.500" r="10" fill="#e8f2f0" stroke="#4a4f58" strokeWidth="1.800" />
      </Ic>
      <Caret className="ml-[11px]" />
      <Ic className="ml-[13px]" size={30} vb="0 0 30 30">
        <path d="M1 1H29V22.500H1Z" fill="#f4f5f7" stroke={S} strokeWidth="1.600" />
        <path d="M4 3.500H26V20H4Z" fill="#98b6df" stroke="#24407c" strokeWidth="1.400" />
        <path d="M12 23V27Q8 27 7 29.500H23Q22 27 18 27V23" fill="#e4e7ec" stroke={S} strokeWidth="1.300" />
      </Ic>
      <Caret className="ml-[5px]" />
      <Ic className="ml-[15px]" size={30} vb="0 0 30 30">
        <defs>
          <linearGradient id="gridFade" x1="0" y1="0" x2="0" y2="1">
            <stop offset="0" stopColor="#9a9a9a" />
            <stop offset="1" stopColor="#5d6472" />
          </linearGradient>
        </defs>
        <path d="M1 1H29V29H1Z" fill="url(#gridFade)" stroke="#333" strokeWidth="1.600" />
        {[0, 1, 2, 3, 4, 5, 6].map((r) =>
          [0, 1, 2, 3, 4, 5, 6].map((c) => (
            <rect key={r * 7 + c} x={2 + c * 3.8} y={2 + r * 3.8} width="3" height="3" fill="#fff" opacity={1 - r * 0.07} />
          )),
        )}
      </Ic>
      <Caret className="ml-[5px]" />
      <Ic className="ml-[15px]" w={29} h={25} vb="0 0 29 25">
        <path d="M1 1H28V24H1Z" fill="#b4cdec" stroke="#24407c" strokeWidth="1.600" />
        <path d="M14.500 1V24M1 12.500H28" stroke="#24407c" strokeWidth="1.600" />
        <path d="M3.500 3.500H12V10H3.500ZM17 3.500H25.500V10H17ZM3.500 15H12V21.500H3.500ZM17 15H25.500V21.500H17Z" fill="#98b6df" stroke="#6486ba" />
      </Ic>
      <Caret className="ml-[6px]" />
    </div>
  );
}

const RULER = [950, 900, 850, 800, 750, 700, 650, 600, 550, 500, 450, 400, 350, 300, 250, 200, 150, 100, 50, 0, 50, 100, 150, 200];

function Canvas() {
  return (
    <div className="relative h-[1374px] overflow-hidden bg-white">
      <Scene />
      <div className="absolute left-[2641px] top-[-14.400px] text-[30px] text-[#666] [font-family:'Liberation_Sans',Arial,sans-serif]">
        {RULER.map((n, i) => (
          <div key={i} className={"flex h-[58.6px] items-center leading-none " + (n === 0 ? "" : n === 50 ? "pl-1" : "pl-[7px]")}>
            {n}
          </div>
        ))}
      </div>
      <div className="absolute left-[2px] top-2 flex h-[49px] w-[599px] items-center border-b-2 border-l border-r-2 border-t border-[#c8c8c8] bg-[#f1f1f1]">
        <Ic className="ml-[9px]" w={20} h={10} vb="0 0 20 10">
          <path d="M0 5 10 0V10ZM10 5 20 0V10Z" fill="#333" />
        </Ic>
        <Fit w={139} className="ml-[19px] pb-[2px] text-[22px] text-[#5c5c5c]">NAVIGATEUR</Fit>
        <Ic className="ml-[370px]" size={16} vb="0 0 16 16">
          <rect width="16" height="16" rx="6" fill="#333" />
          <path d="M2.500 8H13.500" stroke="#bbb" strokeWidth="2" />
        </Ic>
      </div>
      <Tree />
      <div className="absolute left-[2px] top-[1316px] flex h-[49px] w-[599px] items-center border-b-2 border-l border-r-2 border-[#c8c8c8] bg-[#f1f1f1]">
        <Fit w={171} className="ml-[49px] pb-[2px] text-[22px] text-[#5c5c5c]">COMMENTAIRES</Fit>
        <Ic className="ml-[337px]" size={18} vb="0 0 18 18">
          <circle cx="9" cy="9" r="9" fill="#333" />
          <path d="M3.500 9H14.500M9 3.500V14.500" stroke="#ddd" strokeWidth="2" />
        </Ic>
      </div>
      <NavBar />
    </div>
  );
}

const HISTORY = "SESESSSESSSRSHSEMMSEESSFSSSSSSSSSECCMMMCMMMMMCSSRMMHMS";

const SHAPES: Record<string, ReactNode> = {
  S: <SketchEditG />,
  E: <ExtrudeG />,
  R: <RevolveG />,
  H: <HoleG />,
  M: <MoveG />,
  F: <FormG star={false} />,
  C: <CopyG />,
};

function Timeline() {
  return (
    <div className="relative h-24 bg-[#dedede] pt-[6px]">
      <div className="absolute left-0 top-0 h-[6px] w-[264px] bg-[#cbcbcb]" />
      <div className="absolute right-0 top-0 h-[6px] w-[88px] bg-[#cbcbcb]" />
      <div className="absolute left-0 top-0 h-1 w-full bg-[#cbcbcb]" />
      <div className="relative flex h-[90px] items-start bg-linear-to-b from-[#f3f3f3] via-[#ebebeb] to-[#d9d9d9]">
        <div className="absolute left-0 top-0 h-full w-[70px] bg-linear-to-r from-[#f0f0f0] to-transparent" />
        <div className="absolute right-0 top-0 h-full w-[110px] bg-linear-to-l from-[#f0f0f0] to-transparent" />
        <div className="absolute left-[2px] top-0 h-[14px] w-[502px] rounded-b-md rounded-tr-md bg-[#cacaca]" />
        <div className="relative ml-4 mt-[38px] flex h-[30px] w-[222px] shrink-0 items-center justify-between">
          <Ic className="mt-[2px]" w={22} h={24} vb="0 0 22 24"><path d="M0 0H4V24H0ZM22 0V24L5 12Z" fill="#606060" /></Ic>
          <Ic className="mt-[2px]" w={25} h={24} vb="0 0 25 24"><path d="M20 0V24L0 12ZM22 8H25V18H22Z" fill="#606060" /></Ic>
          <Ic w={24} h={30} vb="0 0 24 30"><path d="M0 0 24 15 0 30Z" fill="#606060" /></Ic>
          <Ic className="mt-[2px]" w={25} h={24} vb="0 0 25 24"><path d="M6 0V24L25 12ZM0 8H4V18H0Z" fill="#606060" /></Ic>
          <Ic className="mt-[2px]" w={22} h={24} vb="0 0 22 24"><path d="M18 0H22V24H18ZM0 0V24L17 12Z" fill="#606060" /></Ic>
        </div>
        <div className="relative ml-12 mt-[30px] w-[2594px] shrink-0">
          <div className="flex gap-4">
            {HISTORY.split("").map((k, i) => (
              <div key={i} className="flex w-8 shrink-0 flex-col">
                <Ic size={32} className={i === 53 ? "opacity-25" : ""}>{SHAPES[k]}</Ic>
                <div className="ml-4 mt-[6px] h-[10px] w-1 bg-[#bdbdbd]" />
              </div>
            ))}
          </div>
          <div className="ml-4 flex h-1">
            <div className="w-[2556px] bg-[#b8b8b8]" />
            <div className="ml-1 w-2 bg-[#bdbdbd]" />
            <div className="ml-1 w-[6px] bg-[#bdbdbd]" />
          </div>
          <Ic className="absolute -top-3 left-[2524px]" w={24} h={64} vb="0 0 24 64">
            <path d="M0 0H24V9L14 18V64H10V18L0 9Z" fill="#5f5f5f" />
          </Ic>
        </div>
        <GearShape className="relative ml-10 mt-[38px]" size={30} c="#777" hole="#ededed" />
      </div>
    </div>
  );
}

export default function App() {
  return (
    <div className="h-[1746px] w-[2976px] overflow-hidden bg-[#f1f1f1] [font-family:'Open_Sans','Noto_Sans',sans-serif]">
      <div className="relative flex h-[42px] items-start justify-center bg-[#f3f1ef]">
        <div className="absolute left-[10px] top-[2px] flex gap-4">
          <div className="size-6 rounded-full border border-[#d9564b] bg-[#ed6b5f]" />
          <div className="size-6 rounded-full border border-[#d9a33c] bg-[#f5bf4f]" />
          <div className="size-6 rounded-full border border-[#4fa93f] bg-[#61c554]" />
        </div>
        <Fit w={537} className="ml-[-6px] text-[26px] font-bold text-[#4a4a4a] [font-family:Inter,sans-serif]">Autodesk Fusion 360 (Licence Education)</Fit>
      </div>
      <div className="h-[2px] border-t border-[#a3a3a3] bg-[#bebebe]" />
      <TopBar />
      <Ribbon />
      <Canvas />
      <Timeline />
    </div>
  );
}
